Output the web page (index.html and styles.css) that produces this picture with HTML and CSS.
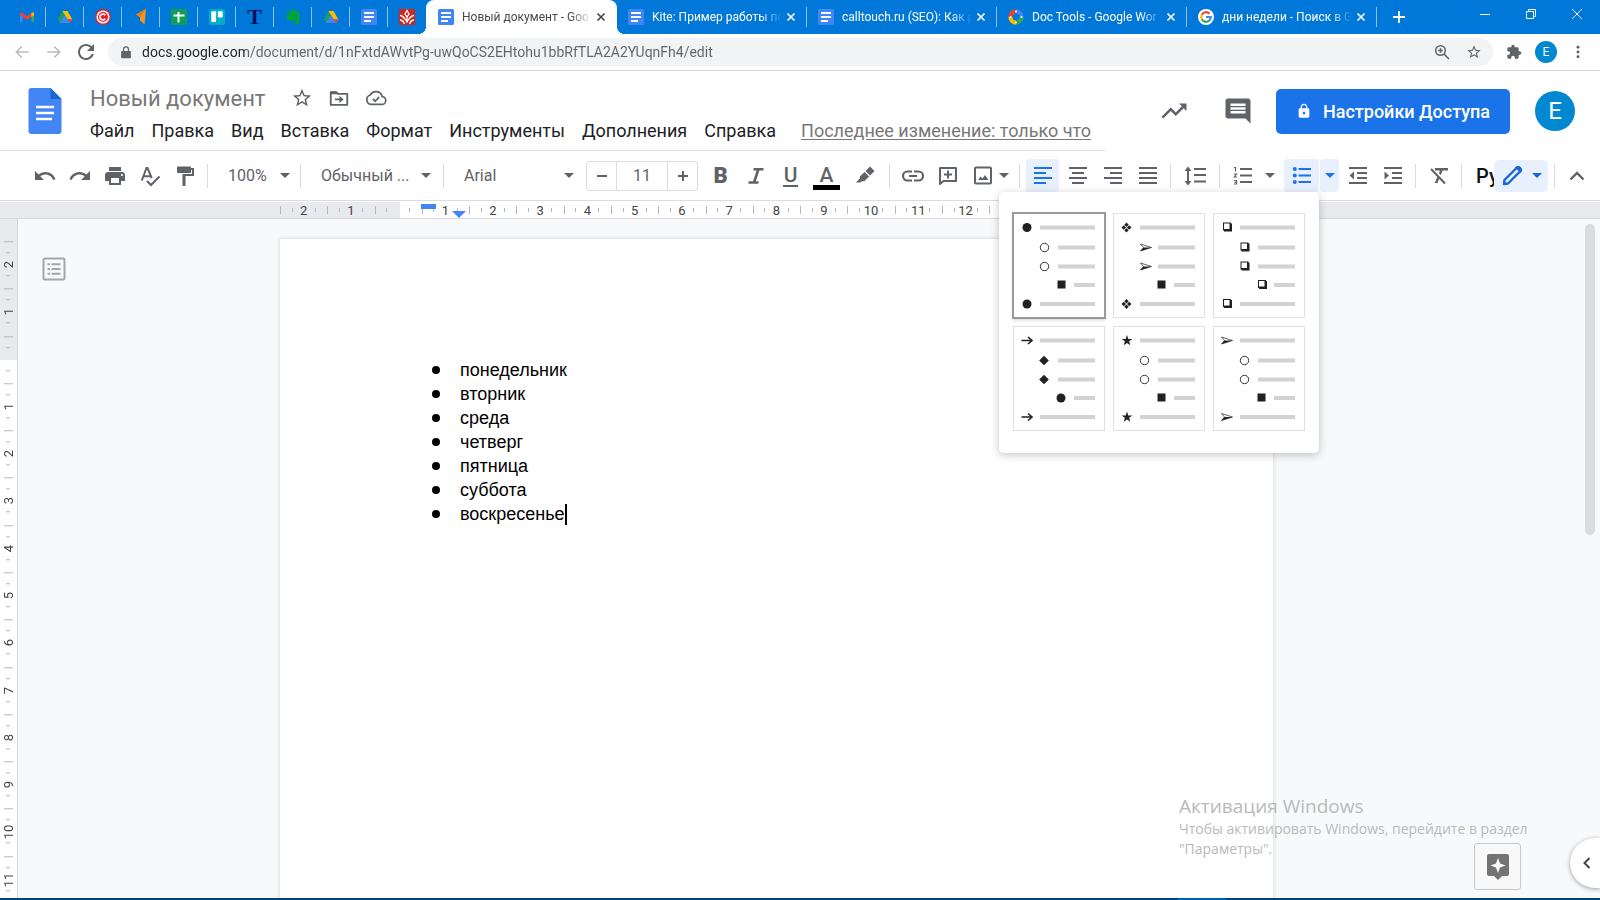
FILE: index.html
```html
<!DOCTYPE html>
<html lang="ru">
<head>
    <meta charset="UTF-8">
    <meta name="viewport" content="width=device-width, initial-scale=1.0">
    <title>Новый документ - Google Документы</title>
    <link rel="stylesheet" href="styles.css">
</head>
<body>
    <svg class="sprite" aria-hidden="true">
        <symbol id="docs" viewBox="0 0 16 16"><rect width="16" height="16" rx="1.5" fill="#4285f4"/><path d="M3 4h10M3 8h10M3 12h7" stroke="#fff" stroke-width="1.8"/></symbol>
        <symbol id="drive" viewBox="0 0 16 16"><path d="M5.5 2h5L5.2 11.2 2.700 14 .8 10.500z" fill="#1e9e58"/><path d="M5.500 2h5L15.400 10.500h-5z" fill="#fbbc04"/><path d="M5.400 10.500h5L8 14H2.700z" fill="#4285f4"/><path d="M5 10.500 8 5.800l2.700 4.700 2.500 3.500H2.700z" fill="#4285f4"/><path d="M10.400 10.500h5L13.200 14z" fill="#ea4335"/></symbol>
        <symbol id="close" viewBox="0 0 10 10"><path d="m1.500 1.500 7 7m0-7-7 7" stroke="currentColor" stroke-width="1.700"/></symbol>
        <symbol id="star" viewBox="0 0 24 24"><path d="M22 9.240l-7.190-.62L12 2 9.190 8.630 2 9.240l5.460 4.730L5.820 21 12 17.270 18.180 21l-1.630-7.030L22 9.240zM12 15.400l-3.760 2.270 1-4.280-3.320-2.880 4.380-.38L12 6.100l1.710 4.040 4.380.38-3.320 2.880 1 4.280L12 15.400z"/></symbol>
        <symbol id="lock" viewBox="0 0 24 24"><path d="M18 8h-1V6c0-2.760-2.240-5-5-5S7 3.240 7 6v2H6c-1.100 0-2 .9-2 2v10c0 1.100.9 2 2 2h12c1.100 0 2-.9 2-2V10c0-1.100-.9-2-2-2zm-6 9c-1.100 0-2-.9-2-2s.9-2 2-2 2 .9 2 2-.9 2-2 2zm3.100-9H8.900V6c0-1.710 1.390-3.100 3.100-3.100s3.100 1.390 3.100 3.100v2z"/></symbol>
        <!-- bullets of the list presets, each drawn round 0,0 -->
        <g id="b-disc"><circle r="4.500" fill="#212121"/></g>
        <g id="b-ring"><circle r="4.200" fill="none" stroke="#212121" stroke-width=".9"/></g>
        <g id="b-square"><rect x="-4" y="-4" width="8" height="8" fill="#212121"/></g>
        <g id="b-diamond"><path d="M0-4.800 4.800 0 0 4.800-4.800 0z" fill="#212121"/></g>
        <g id="b-four"><path d="M0-5 2.200-2.700 0-.5-2.200-2.700zM0 .5 2.200 2.700 0 5-2.200 2.700zM-2.700-2.200-.5 0-2.700 2.200-5 0zM2.700-2.200 5 0 2.700 2.200.5 0z" fill="#212121"/></g>
        <g id="b-shadow"><path d="M-4-4.500h8v1h1v8h-8v-1h-1z" fill="#212121"/><path d="M-3-3.500h5.500v5.500H-3z" fill="#fff"/></g>
        <g id="b-arrowhead"><path d="M-5.500-3.500 5.500 0-5.500 3.500-2.500 0z" fill="#fff" stroke="#212121" stroke-width=".7"/><path d="M-5.500 3.500-2.500 0h8z" fill="#212121"/></g>
        <g id="b-arrow"><path d="M-5.500 0H5M1-3.500 5 0 1 3.500" fill="none" stroke="#212121" stroke-width="1.600"/></g>
        <g id="b-star"><path d="M0-5.400 1.300-1.600H5.400L2.100.8 3.300 4.800 0 2.400-3.300 4.800-2.100.8-5.400-1.600H-1.300z" fill="#212121"/></g>
        <g id="bars" fill="#d2d2d2"><path d="M27 12.500h55v4H27zM45 32.500h37v4H45zM45 51.500h37v4H45zM61 70h21v4H61zM27 89h55v4H27z"/></g>
    </svg>

    <div class="tab-strip">
        <nav class="pinned-tabs" aria-label="Закреплённые вкладки">
            <a href="#" aria-label="Gmail"><svg viewBox="0 0 16 16"><path d="M1 13V4h2.600v9z" fill="#4285f4"/><path d="M12.400 4H15v9h-2.600z" fill="#34a853"/><path d="M1 3.200 3.600 4 8 7.500 12.400 4l2.600-.8v2.900L8 11 1 6.100z" fill="#ea4335"/><path d="M12.400 4 15 3.200v3l-2.600 1.800z" fill="#fbbc04"/></svg></a>
            <a href="#" aria-label="Диск"><svg><use href="#drive"/></svg></a>
            <a href="#" aria-label="Copyright"><svg viewBox="0 0 16 16"><circle cx="8" cy="8" r="8" fill="#e3202b"/><circle cx="8" cy="8" r="5.800" fill="none" stroke="#fff" stroke-width="1.500"/><path d="M10.300 6.200a3 3 0 1 0 0 3.600" fill="none" stroke="#fff" stroke-width="1.700"/></svg></a>
            <a href="#" aria-label="Аналитика"><svg viewBox="0 0 16 16"><path d="M3 5.500 13 0l-1.500 15.500L7 11.500V8z" fill="#f7941d"/><path d="M13 0 7 8 3 5.500z" fill="#e07f0f"/></svg></a>
            <a href="#" aria-label="Таблицы"><svg viewBox="0 0 16 16"><rect width="16" height="16" rx="1" fill="#0f9d58"/><path d="M2.500 6.500h11M7.500 3v10.500" stroke="#fff" stroke-width="2"/></svg></a>
            <a href="#" aria-label="Trello"><svg viewBox="0 0 16 16"><rect width="16" height="16" rx="2.500" fill="#00aecc"/><rect x="2.300" y="2.300" width="4.800" height="10.700" rx="1" fill="#fff"/><rect x="8.900" y="2.300" width="4.800" height="6.200" rx="1" fill="#fff"/></svg></a>
            <a href="#" class="t-tab">T</a>
            <a href="#" aria-label="Evernote"><svg viewBox="0 0 16 16"><path d="M5 1v3.500H1.500zM6 .8C8 0 9.500 1 10 2c2 0 4 .5 4.300 2 .6 3 .5 6-.3 9-.4 1.800-1.500 2.500-3 2.500-2.500 0-3-3.500-.5-4v1.500c-.8.300-.5 1 .3 1 1 0 .7-2.500-.8-3-.8 1-4 .8-5.500.3C2 10.800 1.500 7 1.500 5.500h4.500z" fill="#00a82d"/><path d="M7 15c-.8-1.500-.3-3.300 1.500-4l2 .3v1.500z" fill="#0078d9"/><circle cx="11.300" cy="7" r=".9" fill="#0078d9"/></svg></a>
            <a href="#" aria-label="Диск"><svg><use href="#drive"/></svg></a>
            <a href="#" aria-label="Документы"><svg><use href="#docs"/></svg></a>
            <a href="#" aria-label="Портал"><svg viewBox="0 0 16 16"><path d="M0 0h16v16H0z" fill="#d0261c"/><path d="M8 1.500 10 5 8 8 6 5zM1 6.500c3 0 4.500 2.500 7 6.500 2.500-4 4-6.500 7-6.500M1 11c2.500 0 3.500 1.500 4.500 4M15 11c-2.500 0-3.500 1.500-4.500 4M8 8v5" fill="none" stroke="#fff" stroke-width="1.300"/></svg></a>
        </nav>
        <div class="tab active">
            <svg class="favicon"><use href="#docs"/></svg>
            <a href="#">Новый документ - Goo</a>
            <button aria-label="Закрыть"><svg><use href="#close"/></svg></button>
        </div>
        <div class="tab">
            <svg class="favicon"><use href="#docs"/></svg>
            <a href="#">Kite: Пример работы по</a>
            <button aria-label="Закрыть"><svg><use href="#close"/></svg></button>
        </div>
        <div class="tab">
            <svg class="favicon"><use href="#docs"/></svg>
            <a href="#">calltouch.ru (SEO): Как р</a>
            <button aria-label="Закрыть"><svg><use href="#close"/></svg></button>
        </div>
        <div class="tab">
            <svg class="favicon" viewBox="0 0 16 16"><g fill="none" stroke-width="4.200"><path d="M8 2.400A5.600 5.600 0 0 1 13.600 8" stroke="#4285f4"/><path d="M13.600 8A5.600 5.600 0 0 1 8 13.600" stroke="#34a853"/><path d="M8 13.600A5.600 5.600 0 0 1 2.400 8" stroke="#fbbc04"/><path d="M2.400 8A5.600 5.600 0 0 1 8 2.400" stroke="#ea4335"/></g><g fill="#fff"><circle cx="8" cy="2.500" r="1"/><circle cx="13.500" cy="8" r="1"/><circle cx="8" cy="13.500" r="1"/><circle cx="2.500" cy="8" r="1"/></g></svg>
            <a href="#">Doc Tools - Google Wor</a>
            <button aria-label="Закрыть"><svg><use href="#close"/></svg></button>
        </div>
        <div class="tab">
            <svg class="favicon" viewBox="0 0 16 16"><circle cx="8" cy="8" r="8" fill="#fff"/><g fill="none" stroke-width="2.200"><path d="M11.500 4.700A4.800 4.800 0 0 0 3.800 5.800" stroke="#ea4335"/><path d="M3.800 5.800a4.800 4.800 0 0 0 0 4.400" stroke="#fbbc04"/><path d="M3.800 10.200a4.800 4.800 0 0 0 7.400 1.400" stroke="#34a853"/><path d="M11.200 11.600A4.800 4.800 0 0 0 12.800 8H8" stroke="#4285f4"/></g></svg>
            <a href="#">дни недели - Поиск в G</a>
            <button aria-label="Закрыть"><svg><use href="#close"/></svg></button>
        </div>
        <button class="new-tab" aria-label="Новая вкладка"><svg viewBox="0 0 12 12"><path d="M6 0v12M0 6h12" stroke="#fff" stroke-width="1.800"/></svg></button>
        <div class="window-controls">
            <button aria-label="Свернуть"><svg viewBox="0 0 12 12"><path d="M1 6.500h10"/></svg></button>
            <button aria-label="Восстановить"><svg viewBox="0 0 12 12"><path d="M1.500 3.500h7v7h-7zM3.500 3.500v-2h7v7h-2"/></svg></button>
            <button aria-label="Закрыть окно"><svg viewBox="0 0 12 12"><path d="m1 1 10 10m0-10L1 11"/></svg></button>
        </div>
    </div>

    <div class="address-bar">
        <div class="nav-buttons">
            <button class="off" aria-label="Назад"><svg viewBox="0 0 24 24"><path d="M21 11H6.800l5.600-5.600L11 4l-8 8 8 8 1.400-1.400L6.800 13H21z"/></svg></button>
            <button class="off" aria-label="Вперёд"><svg viewBox="0 0 24 24"><path d="M3 11h14.200l-5.600-5.600L13 4l8 8-8 8-1.400-1.400 5.600-5.600H3z"/></svg></button>
            <button aria-label="Обновить"><svg viewBox="3 3 18 18"><path d="M17.650 6.350C16.200 4.900 14.210 4 12 4c-4.420 0-7.990 3.580-7.990 8s3.570 8 7.990 8c3.730 0 6.840-2.550 7.730-6h-2.080c-.82 2.330-3.040 4-5.650 4-3.310 0-6-2.690-6-6s2.690-6 6-6c1.660 0 3.140.69 4.220 1.780L13 11h7V4l-2.350 2.350z"/></svg></button>
        </div>
        <form class="omnibox">
            <svg class="url-lock" viewBox="0 0 12 16"><path d="M1 6h10a1 1 0 0 1 1 1v7a1 1 0 0 1-1 1H1a1 1 0 0 1-1-1V7a1 1 0 0 1 1-1z"/><path d="M3 6.500V4a3 3 0 0 1 6 0v2.500" fill="none" stroke="#5f6368" stroke-width="1.500"/></svg>
            <input type="text" aria-label="Адрес" value="docs.google.com/document/d/1nFxtdAWvtPg-uwQoCS2EHtohu1bbRfTLA2A2YUqnFh4/edit">
            <button type="button" aria-label="Масштаб"><svg viewBox="0 0 16 16"><g fill="none" stroke="#5f6368" stroke-width="1.500"><circle cx="6.500" cy="6.500" r="4.800"/><path d="m10 10 5 5M4.200 6.500h4.600M6.500 4.200v4.600"/></g></svg></button>
            <button type="button" aria-label="В закладки"><svg><use href="#star"/></svg></button>
        </form>
        <button class="extensions" aria-label="Расширения"><svg viewBox="0 0 24 24"><path d="M20.500 11H19V7c0-1.100-.9-2-2-2h-4V3.500C13 2.120 11.880 1 10.500 1S8 2.120 8 3.500V5H4c-1.100 0-1.990.9-1.990 2v3.800H3.500c1.490 0 2.700 1.210 2.700 2.700s-1.210 2.700-2.700 2.700H2V20c0 1.100.9 2 2 2h3.800v-1.500c0-1.490 1.210-2.700 2.700-2.700 1.490 0 2.700 1.210 2.700 2.700V22H17c1.100 0 2-.9 2-2v-4h1.500c1.380 0 2.500-1.120 2.500-2.500S21.880 11 20.500 11z"/></svg></button>
        <button class="avatar small">E</button>
        <button class="more" aria-label="Меню"><svg viewBox="0 0 16 16"><circle cx="8" cy="2.500" r="1.700"/><circle cx="8" cy="8" r="1.700"/><circle cx="8" cy="13.500" r="1.700"/></svg></button>
    </div>

    <header class="header">
        <div class="doc-info">
            <a href="#" class="logo" aria-label="Документы"><svg viewBox="0 0 33 46"><path d="M3 0h19l11 11v32a3 3 0 0 1-3 3H3a3 3 0 0 1-3-3V3a3 3 0 0 1 3-3z" fill="#4285f4"/><path d="M22 0l11 11H22z" fill="#1967d2"/><path d="M7.500 19h18M7.500 25h18M7.500 31h16" stroke="#fff" stroke-width="2.400"/></svg></a>
            <div>
                <div class="title-row">
                    <input class="doc-title" type="text" aria-label="Название документа" value="Новый документ">
                    <button aria-label="Пометить"><svg><use href="#star"/></svg></button>
                    <button aria-label="Переместить"><svg viewBox="0 0 24 24"><path d="M3 5.500h6l2 2h10v12H3z" fill="none" stroke="#5f6368" stroke-width="2" stroke-linejoin="round"/><path d="M3 5h6l2 3H3zM7.500 12.500h5V9.500l4.500 4-4.500 4v-3h-5z"/></svg></button>
                    <button aria-label="Сохранено на Диске"><svg viewBox="0 0 24 24"><path d="M18.700 10.400A7 7 0 0 0 5.700 8.700 5.300 5.300 0 0 0 6.500 19H18a4.300 4.300 0 0 0 .7-8.600z" fill="none" stroke="#5f6368" stroke-width="1.900"/><path d="m8.500 13 2.500 2.500 4.500-4.500" fill="none" stroke="#5f6368" stroke-width="1.800"/></svg></button>
                </div>
                <nav class="menu-bar">
                    <button>Файл</button>
                    <button>Правка</button>
                    <button>Вид</button>
                    <button>Вставка</button>
                    <button>Формат</button>
                    <button>Инструменты</button>
                    <button>Дополнения</button>
                    <button>Справка</button>
                    <a href="#">Последнее изменение: только что</a>
                </nav>
            </div>
        </div>
        <div class="header-actions">
            <button class="header-icon" aria-label="Статистика"><svg viewBox="0 0 24 24"><path d="M16 6l2.290 2.290-4.880 4.880-4-4L2 16.590 3.410 18l6-6 4 4 6.300-6.290L22 12V6z"/></svg></button>
            <button class="header-icon" aria-label="Комментарии"><svg viewBox="0 0 24 24"><path d="M22 4c0-1.100-.9-2-2-2H4c-1.100 0-2 .9-2 2v12c0 1.100.9 2 2 2h14l4 4zM18 14H6v-2h12v2zm0-3H6V9h12v2zm0-3H6V6h12v2z"/></svg></button>
            <button class="share"><svg><use href="#lock"/></svg>Настройки Доступа</button>
            <button class="avatar">E</button>
        </div>
    </header>

    <div class="toolbar">
        <div class="group">
            <button aria-label="Отменить"><svg viewBox="0 0 24 24"><path d="M12.500 8c-2.650 0-5.050.99-6.900 2.600L2 7v9h9l-3.620-3.620c1.390-1.160 3.160-1.880 5.120-1.880 3.540 0 6.550 2.310 7.600 5.500l2.370-.78C21.080 11.030 17.150 8 12.500 8z"/></svg></button>
            <button aria-label="Повторить"><svg viewBox="0 0 24 24"><path d="M18.400 10.600C16.550 8.990 14.150 8 11.500 8c-4.650 0-8.580 3.030-9.960 7.220L3.900 16c1.050-3.190 4.050-5.500 7.600-5.500 1.950 0 3.730.72 5.120 1.880L13 16h9V7l-3.600 3.600z"/></svg></button>
            <button aria-label="Печать"><svg viewBox="0 0 24 24"><path d="M19 8H5c-1.660 0-3 1.340-3 3v6h4v4h12v-4h4v-6c0-1.660-1.340-3-3-3zm-3 11H8v-5h8v5zm3-7c-.55 0-1-.45-1-1s.45-1 1-1 1 .45 1 1-.45 1-1 1zm-1-9H6v4h12V3z"/></svg></button>
            <button aria-label="Правописание"><svg viewBox="0 0 24 24"><g fill="none" stroke="#5f6368" stroke-width="2"><path d="M3.800 16.500 8.500 4h1l4.200 10M5.500 12.200h7"/><path d="m9 17 4 4 8.500-8.500"/></g></svg></button>
            <button aria-label="Копировать форматирование"><svg viewBox="0 0 24 24"><path d="M18 4V3.500c0-.55-.45-1-1-1H5c-.55 0-1 .45-1 1V8c0 .55.450 1 1 1h12c.55 0 1-.45 1-1V6h1v4H9.500v11c0 .55.450 1 1 1h1c.55 0 1-.45 1-1v-9H21V4z"/></svg></button>
        </div>
        <span class="sep"></span>
        <label class="drop zoom"><select aria-label="Масштаб"><option>100%</option></select></label>
        <span class="sep"></span>
        <label class="drop style"><select aria-label="Стили"><option>Обычный ...</option></select></label>
        <span class="sep"></span>
        <label class="drop font"><select aria-label="Шрифт"><option>Arial</option></select></label>
        <div class="font-size">
            <button aria-label="Уменьшить"><svg viewBox="0 0 12 12"><path d="M1 5h10v2H1z"/></svg></button>
            <input type="text" aria-label="Размер шрифта" value="11">
            <button aria-label="Увеличить"><svg viewBox="0 0 12 12"><path d="M5 1h2v4h4v2H7v4H5V7H1V5h4z"/></svg></button>
        </div>
        <div class="group">
            <button class="bold">B</button>
            <button aria-label="Курсив"><svg viewBox="0 0 24 24"><path d="M9.500 5.200h10M4.500 18.500h10M14.500 5l-4.500 13.500" fill="none" stroke="#5f6368" stroke-width="2.600"/></svg></button>
            <button class="underline">U</button>
            <button class="text-color">A</button>
            <button class="marker" aria-label="Цвет выделения"><svg viewBox="0 0 24 24"><path d="m17 2.500 4.500 4.500-4.500 4.500-4.500-4.500zM11.600 8l4.500 4.500-4 4c-1 1-2 1-3 .5L7.500 18.500H3l4-4.200c-.5-.8-.4-1.600.4-2.300z"/></svg></button>
        </div>
        <span class="sep"></span>
        <div class="group">
            <button aria-label="Ссылка"><svg viewBox="0 0 24 24"><path d="M11 7.500H6.500a4.500 4.500 0 0 0 0 9H11M13 7.500h4.500a4.500 4.500 0 0 1 0 9H13M8 12h8" fill="none" stroke="#5f6368" stroke-width="2.200"/></svg></button>
            <button aria-label="Добавить комментарий"><svg viewBox="0 0 24 24"><path d="M4 4h16v13H7.500L4 20z" fill="none" stroke="#5f6368" stroke-width="2" stroke-linejoin="round"/><path d="M11 6.500h2v3h3v2h-3v3h-2v-3H8v-2h3z"/></svg></button>
            <button aria-label="Изображение"><svg viewBox="0 0 24 24"><rect x="4" y="3.500" width="16" height="16" rx="1" fill="none" stroke="#5f6368" stroke-width="2"/><path d="m7 16 2.500-3.500 2 2 2.500-3.500 3.500 5z"/></svg></button>
            <button class="arrow image-arrow" aria-label="Вставить изображение"></button>
        </div>
        <span class="sep"></span>
        <div class="group">
            <button class="on" aria-label="По левому краю"><svg viewBox="0 0 24 24"><path d="M3 3h18v2H3zM3 8h12v2H3zM3 13h18v2H3zM3 18h12v2H3z"/></svg></button>
            <button aria-label="По центру"><svg viewBox="0 0 24 24"><path d="M3 3h18v2H3zM6 8h12v2H6zM3 13h18v2H3zM6 18h12v2H6z"/></svg></button>
            <button aria-label="По правому краю"><svg viewBox="0 0 24 24"><path d="M3 3h18v2H3zM9 8h12v2H9zM3 13h18v2H3zM9 18h12v2H9z"/></svg></button>
            <button aria-label="По ширине"><svg viewBox="0 0 24 24"><path d="M3 3h18v2H3zM3 8h18v2H3zM3 13h18v2H3zM3 18h18v2H3z"/></svg></button>
        </div>
        <span class="sep"></span>
        <div class="group">
            <button class="spacing" aria-label="Интервал"><svg viewBox="0 0 24 24"><path d="M6 7h2.500L5 2.500 1.500 7H4v10H1.500L5 21.500 8.500 17H6V7zm5-3v2h12V4H11zm0 14.500h12v-2H11v2zm0-6.500h12v-2H11v2z"/></svg></button>
        </div>
        <span class="sep"></span>
        <div class="group">
            <button aria-label="Нумерованный список"><svg viewBox="0 0 24 24"><path d="M9 4h12v2H9zM9 10.500h12v2H9zM9 17h12v2H9z"/><path d="M3 3.500h1.500V7.500M3 10h2.500L3.300 13h2.700M3 16.500h2.600v3.500H3M3.500 18.300h2" fill="none" stroke="#5f6368" stroke-width="1.200"/></svg></button>
            <button class="arrow" aria-label="Виды нумерации"></button>
        </div>
        <div class="bullets">
            <button class="on" aria-label="Маркированный список"><svg viewBox="0 0 24 24"><path d="M8.500 4H21v2H8.500zM8.500 10.500H21v2H8.500zM8.500 17H21v2H8.500z"/><circle cx="4.800" cy="5" r="2"/><circle cx="4.800" cy="11.500" r="2"/><circle cx="4.800" cy="18" r="2"/></svg></button>
            <button class="on arrow" aria-label="Виды маркеров"></button>
            <div class="bullet-menu">
                <button class="selected" aria-label="Круг, кольцо, квадрат"><svg viewBox="0 0 92 105"><use href="#bars"/><use href="#b-disc" x="14" y="14.500"/><use href="#b-ring" x="31.500" y="34.500"/><use href="#b-ring" x="31.500" y="53.500"/><use href="#b-square" x="48.500" y="71.500"/><use href="#b-disc" x="14" y="91"/></svg></button>
                <button aria-label="Ромбы, стрелка, квадрат"><svg viewBox="0 0 92 105"><use href="#bars"/><use href="#b-four" x="13.500" y="14.500"/><use href="#b-arrowhead" x="33" y="34.500"/><use href="#b-arrowhead" x="33" y="53.500"/><use href="#b-square" x="48.500" y="71.500"/><use href="#b-four" x="13.500" y="91"/></svg></button>
                <button aria-label="Квадрат с тенью"><svg viewBox="0 0 92 105"><use href="#bars"/><use href="#b-shadow" x="14" y="14"/><use href="#b-shadow" x="31.500" y="34"/><use href="#b-shadow" x="31.500" y="53"/><use href="#b-shadow" x="49" y="71.500"/><use href="#b-shadow" x="14" y="90.500"/></svg></button>
                <button aria-label="Стрелка, ромб, круг"><svg viewBox="0 0 92 105"><use href="#bars"/><use href="#b-arrow" x="14" y="14.500"/><use href="#b-diamond" x="31" y="34.500"/><use href="#b-diamond" x="31" y="53.500"/><use href="#b-disc" x="48" y="72"/><use href="#b-arrow" x="14" y="91"/></svg></button>
                <button aria-label="Звезда, кольцо, квадрат"><svg viewBox="0 0 92 105"><use href="#bars"/><use href="#b-star" x="14" y="14.500"/><use href="#b-ring" x="31.500" y="34.500"/><use href="#b-ring" x="31.500" y="53.500"/><use href="#b-square" x="48.500" y="71.500"/><use href="#b-star" x="14" y="91"/></svg></button>
                <button aria-label="Стрелка, кольцо, квадрат"><svg viewBox="0 0 92 105"><use href="#bars"/><use href="#b-arrowhead" x="14" y="14.500"/><use href="#b-ring" x="31.500" y="34.500"/><use href="#b-ring" x="31.500" y="53.500"/><use href="#b-square" x="48.500" y="71.500"/><use href="#b-arrowhead" x="14" y="91"/></svg></button>
            </div>
        </div>
        <div class="group">
            <button aria-label="Уменьшить отступ"><svg viewBox="0 0 24 24"><path d="M3 3h18v2H3zM11 8h10v2H11zM11 13h10v2H11zM3 18h18v2H3zM8 7.500v8L3.500 11.500z"/></svg></button>
            <button aria-label="Увеличить отступ"><svg viewBox="0 0 24 24"><path d="M3 3h18v2H3zM11 8h10v2H11zM11 13h10v2H11zM3 18h18v2H3zM3.500 7.500v8L8 11.500z"/></svg></button>
        </div>
        <span class="sep"></span>
        <div class="group">
            <button aria-label="Очистить форматирование"><svg viewBox="0 0 24 24"><path d="M8 4h13v2.500H8zM13 6h2.800l-2 5-1.800-1.500zM10.500 12.500l1.800 1.800L10.500 19H7.700z"/><path d="M4 5l14 14.500" stroke="#5f6368" stroke-width="2"/></svg></button>
        </div>
        <span class="sep"></span>
        <button class="input-tools">Ру</button>
        <button class="mode" aria-label="Режим редактирования"><svg viewBox="0 0 24 24"><path d="m4 20 .5-4L16 4.500a2.200 2.200 0 0 1 3.500 3.500L8 19.500z" fill="none" stroke="#1967d2" stroke-width="2.400" stroke-linejoin="round"/><path d="m15 3.500 2-1.500h2.500L22 4.500V7l-1.500 2zM3 21v-4l4 4z" fill="#1967d2"/></svg><span class="caret-down"></span></button>
        <span class="sep"></span>
        <button class="collapse" aria-label="Скрыть меню"><svg viewBox="0 0 16 16"><path d="m1.500 11.500 6.500-6.500 6.500 6.500" fill="none" stroke="#5f6368" stroke-width="2.400"/></svg></button>
    </div>

    <div class="ruler">
        <div class="ruler-scale">
            <span>2</span><span>1</span><span></span><span>1</span><span>2</span><span>3</span><span>4</span><span>5</span><span>6</span><span>7</span><span>8</span><span>9</span><span>10</span><span>11</span><span>12</span><span></span><span></span><span></span><span></span><span></span><span></span>
            <i class="first-line"></i>
            <i class="left-indent"></i>
        </div>
    </div>

    <main class="workspace">
        <div class="side-ruler">
            <div class="side-scale">
                <span>2</span><span>1</span><span></span><span>1</span><span>2</span><span>3</span><span>4</span><span>5</span><span>6</span><span>7</span><span>8</span><span>9</span><span>10</span><span>11</span>
            </div>
        </div>
        <button class="outline" aria-label="Структура документа"><svg viewBox="0 0 24 24"><rect x="1.500" y="1.500" width="21" height="21" rx="1.500" fill="none" stroke="#a3a6a9" stroke-width="2"/><path d="M5.500 7.200h2.500m1.500 0h9M5.500 12h2.500m1.500 0h9M5.500 16.800h2.500m1.500 0h9" stroke="#a3a6a9" stroke-width="2"/></svg></button>
        <article class="page">
            <ul>
                <li>понедельник</li>
                <li>вторник</li>
                <li>среда</li>
                <li>четверг</li>
                <li>пятница</li>
                <li>суббота</li>
                <li>воскресенье<span class="cursor"></span></li>
            </ul>
        </article>
        <div class="scroll-thumb"></div>
        <div class="activation">
            <h2>Активация Windows</h2>
            <p>Чтобы активировать Windows, перейдите в раздел<br>"Параметры".</p>
        </div>
        <button class="explore" aria-label="Анализ данных"><svg viewBox="0 0 24 28"><path d="M3 1h18a2 2 0 0 1 2 2v18a2 2 0 0 1-2 2h-5l-4 4-4-4H3a2 2 0 0 1-2-2V3a2 2 0 0 1 2-2z" fill="#737373"/><path d="m12 5 2 5.500 5.500 2-5.500 2-2 5.500-2-5.500-5.500-2 5.500-2z" fill="#fff"/></svg></button>
        <button class="side-toggle" aria-label="Показать боковую панель"><svg viewBox="0 0 12 12"><path d="M8.500 1 3.500 6l5 5" fill="none" stroke="#444" stroke-width="2"/></svg></button>
    </main>
    <footer class="taskbar"></footer>
</body>
</html>
```
FILE: styles.css
```css
* {
    box-sizing: border-box;
}

body {
    display: flex;
    flex-direction: column;
    height: 100vh;
    margin: 0;
    overflow: hidden;
    font-family: Roboto, "Liberation Sans", sans-serif;
    color: #202124;
    background-color: #fff;
}

button,
input,
select {
    flex: none;
    margin: 0;
    padding: 0;
    border: 0;
    outline: 0;
    background: none;
    color: inherit;
    font-family: inherit;
}

button {
    display: flex;
    align-items: center;
    justify-content: center;
}

svg {
    display: block;
    flex: none;
    fill: #5f6368;
}

.sprite {
    position: absolute;
    width: 0;
    height: 0;
}

/* browser tabs */
.tab-strip {
    display: flex;
    flex: none;
    height: 34px;
    padding-left: 8px;
    background-color: #0078d9;
    font-size: 12px;
}

.pinned-tabs {
    display: flex;
    flex: none;
    align-items: center;
}

.pinned-tabs a {
    display: flex;
    justify-content: center;
    width: 38px;
    height: 20px;
    padding: 2px 0;
    border-right: 1px solid #8cc1ee;
    text-decoration: none;
}

.pinned-tabs a:last-child {
    border-color: transparent;
}

.pinned-tabs svg,
.favicon {
    width: 16px;
    height: 16px;
}

.pinned-tabs .t-tab {
    color: #0a0f5c;
    font: bold 22px/16px "Liberation Serif", serif;
}

.tab {
    display: flex;
    align-items: center;
    width: 190px;
    min-width: 0;
    padding: 0 8px 0 11px;
    color: #fff;
    background: linear-gradient(#8cc1ee, #8cc1ee) right 0 top 7px / 1px 20px no-repeat;
}

.tab .favicon {
    margin-right: 8px;
}

.tab a {
    flex: 1;
    overflow: hidden;
    color: inherit;
    text-decoration: none;
    white-space: nowrap;
    -webkit-mask-image: linear-gradient(to right, #000 108px, transparent 130px);
    mask-image: linear-gradient(to right, #000 108px, transparent 130px);
}

.tab button {
    width: 16px;
    height: 16px;
    margin-left: 2px;
}

.tab button svg {
    width: 10px;
    height: 10px;
}

.tab.active {
    position: relative;
    width: 191px;
    padding-left: 12px;
    color: #45494d;
    background: #fff;
    border-radius: 8px 8px 0 0;
}

.tab.active::before,
.tab.active::after {
    content: "";
    position: absolute;
    bottom: 0;
    width: 8px;
    height: 8px;
}

.tab.active::before {
    right: 100%;
    background: radial-gradient(circle at 0 0, transparent 8px, #fff 8px);
}

.tab.active::after {
    left: 100%;
    background: radial-gradient(circle at 100% 0, transparent 8px, #fff 8px);
}

.new-tab {
    width: 44px;
}

.new-tab svg,
.window-controls svg {
    width: 12px;
    height: 12px;
}

.window-controls {
    display: flex;
    height: 28px;
    margin-left: auto;
}

.window-controls button {
    width: 46px;
}

.window-controls svg {
    fill: none;
    stroke: #fff;
    stroke-width: 1;
}

/* address row */
.address-bar {
    display: flex;
    flex: none;
    align-items: center;
    height: 37px;
    padding: 0 6px;
    border-bottom: 1px solid #d5d7da;
}

.nav-buttons {
    display: flex;
    margin-right: 6px;
}

.nav-buttons button {
    width: 32px;
}

.nav-buttons svg {
    width: 18px;
    height: 18px;
}

.nav-buttons .off svg {
    fill: #b8babd;
}

.omnibox {
    display: flex;
    flex: 1;
    align-items: center;
    height: 28px;
    padding: 0 3px 0 12px;
    border-radius: 14px;
    background-color: #f1f3f4;
}

.url-lock {
    width: 12px;
    height: 13px;
    margin-right: 10px;
}

.omnibox input {
    flex: 1;
    height: 28px;
    font-size: 14px;
    color: transparent;
    background: linear-gradient(to right, #202124 104px, #5f6368 104px);
    -webkit-background-clip: text;
    background-clip: text;
}

.omnibox button {
    width: 32px;
}

.omnibox button svg {
    width: 16px;
    height: 16px;
}

.extensions {
    width: 42px;
}

.extensions svg {
    width: 16px;
    height: 16px;
}

.avatar {
    width: 40px;
    height: 40px;
    border-radius: 50%;
    background-color: #0288d1;
    color: #fff;
    font-size: 24px;
}

.avatar.small {
    width: 22px;
    height: 22px;
    font-size: 12px;
}

.more {
    width: 32px;
    margin-left: 5px;
}

.more svg {
    width: 14px;
    height: 14px;
}

/* document header */
.header {
    display: flex;
    flex: none;
    justify-content: space-between;
    height: 80px;
}

.doc-info {
    display: flex;
    flex: none;
    padding: 12px 14px 0 28px;
    border-bottom: 1px solid #dadce0;
}

.logo {
    width: 62px;
    padding-top: 5px;
}

.logo svg {
    width: 34px;
    height: 46px;
}

.title-row {
    display: flex;
    align-items: center;
    height: 30px;
}

.doc-title {
    width: 193px;
    height: 30px;
    color: #777;
    font-size: 22px;
}

.title-row button {
    width: 37px;
}

.title-row button svg {
    width: 22px;
    height: 22px;
}

.menu-bar {
    display: flex;
    align-items: center;
    gap: 17px;
    height: 34px;
    font-size: 18px;
    white-space: nowrap;
}

.menu-bar button {
    font-size: 18px;
}

.menu-bar a {
    margin-left: 8px;
    color: #777;
    text-underline-offset: 2px;
}

.header-actions {
    display: flex;
    align-items: center;
    padding-right: 25px;
}

.header-icon {
    width: 64px;
}

.header-icon svg {
    width: 30px;
    height: 30px;
}

.share {
    gap: 11px;
    width: 234px;
    height: 45px;
    margin: 0 25px 0 6px;
    border-radius: 5px;
    background-color: #1a73e8;
    color: #fff;
    font-size: 18px;
    font-weight: 500;
}

.share svg {
    width: 16px;
    height: 16px;
    fill: #fff;
}

/* toolbar */
.toolbar {
    position: relative;
    z-index: 2;
    display: flex;
    flex: none;
    align-items: center;
    height: 50px;
    padding-left: 28px;
    border-bottom: 1px solid #dadce0;
    color: #5f6368;
}

.group {
    display: flex;
    flex: none;
    gap: 2px;
}

.group button,
.bullets > button {
    width: 33px;
    height: 33px;
    border-radius: 3px;
}

.toolbar svg {
    width: 24px;
    height: 24px;
}

.toolbar .on {
    background-color: #e8f0fe;
    color: #1a73e8;
}

.toolbar .on svg {
    fill: #1a73e8;
}

.sep {
    flex: none;
    width: 1px;
    height: 24px;
    margin: 0 6px;
    background-color: #dadce0;
}

.drop {
    display: grid;
    flex: none;
    align-items: center;
}

.drop select {
    grid-area: 1 / 1;
    width: 100%;
    height: 30px;
    padding-left: 14px;
    appearance: none;
    font-size: 16px;
}

.drop::after,
.arrow::after,
.caret-down {
    content: "";
    border: 5px solid transparent;
    border-top-color: currentColor;
    border-bottom: 0;
}

.drop::after {
    grid-area: 1 / 1;
    justify-self: end;
    margin-right: 4px;
    pointer-events: none;
}

.zoom {
    width: 80px;
}

.style {
    width: 130px;
}

.font {
    width: 130px;
    margin-right: 6px;
}

.style::after,
.font::after {
    margin-right: 6px;
}

.font-size {
    display: flex;
    flex: none;
    height: 30px;
    margin-right: 6px;
    border: 1px solid #dadce0;
    border-radius: 3px;
}

.font-size button {
    width: 29px;
}

.font-size svg {
    width: 12px;
    height: 12px;
}

.font-size input {
    width: 52px;
    border: solid #dadce0;
    border-width: 0 1px;
    font-size: 16px;
    text-align: center;
}

.group .bold {
    font-size: 22px;
    font-weight: 900;
}

.group .underline,
.group .text-color {
    flex-direction: column;
    font-size: 21px;
    font-weight: 500;
    line-height: 20px;
}

.underline::after {
    content: "";
    width: 15px;
    height: 2px;
    background-color: #5f6368;
}

.group .text-color {
    width: 35px;
    padding-top: 4px;
}

.text-color::after {
    content: "";
    width: 27px;
    height: 5px;
    background-color: #000;
}

.group .marker {
    width: 37px;
}

.group .arrow {
    width: 18px;
}

.group .image-arrow {
    margin-left: -6px;
}

.group .spacing {
    width: 36px;
}

.bullets {
    position: relative;
    display: flex;
    flex: none;
    gap: 1px;
    margin: 0 2px 0 5px;
}

.bullets > button {
    width: 35px;
}

.bullets > .arrow {
    width: 19px;
}

.bullet-menu {
    position: absolute;
    top: 100%;
    left: -285px;
    display: grid;
    grid-template-columns: repeat(3, 92px);
    gap: 8px;
    padding: 21px 14px 22px;
    border-radius: 5px;
    background-color: #fff;
    box-shadow: 0 2px 8px rgba(60, 64, 67, 0.3);
}

.bullet-menu button {
    height: 105px;
    box-shadow: inset 0 0 0 1px #e0e0e0;
}

.bullet-menu .selected {
    box-shadow: 0 0 0 1px #999, inset 0 0 0 1px #999, 0 2px 3px rgba(0, 0, 0, 0.2);
}

.bullet-menu svg {
    width: 92px;
    height: 105px;
}

.input-tools {
    width: 26px;
    padding-left: 8px;
    overflow: hidden;
    justify-content: flex-start;
    color: #111;
    font-size: 20px;
    font-weight: 500;
}

.mode {
    gap: 8px;
    width: 54px;
    height: 32px;
    border-radius: 5px;
    background-color: #e8f0fe;
    color: #1967d2;
}

.collapse {
    width: 32px;
}

.toolbar .collapse svg {
    width: 16px;
    height: 16px;
}

/* rulers */
.ruler {
    flex: none;
    height: 18px;
    padding: 0 327px 0 280px;
    border-top: 1px solid #fff;
    border-bottom: 1px solid #d5d7da;
    background-color: #e8eaed;
}

.ruler-scale {
    position: relative;
    display: grid;
    grid-template-columns: repeat(21, 1fr);
    height: 16px;
    background: linear-gradient(#fff, #fff) 120px 0 / 800px 16px no-repeat;
    color: #444;
    font-size: 13px;
    line-height: 17px;
    text-align: center;
}

.ruler-scale span {
    background:
        linear-gradient(#b4b7ba, #b4b7ba) 0 4px / 1px 8px no-repeat,
        linear-gradient(#b4b7ba, #b4b7ba) 25% 6px / 1px 4px no-repeat,
        linear-gradient(#b4b7ba, #b4b7ba) 75% 6px / 1px 4px no-repeat;
}

.first-line {
    position: absolute;
    top: 2px;
    left: 141px;
    width: 15px;
    height: 5px;
    background-color: #4285f4;
}

.left-indent {
    position: absolute;
    top: 9px;
    left: 172px;
    border: 7px solid transparent;
    border-top-color: #4285f4;
    border-bottom: 0;
}

.workspace {
    position: relative;
    display: flex;
    flex: 1;
    min-height: 0;
    overflow: hidden;
    background-color: #f8f9fa;
}

.side-ruler {
    flex: none;
    width: 18px;
    padding-top: 22px;
    border-right: 1px solid #d5d7da;
    background: linear-gradient(#e8eaed 141px, #fff 141px);
}

.side-scale {
    display: grid;
    grid-template-rows: repeat(14, 1fr);
    height: 662px;
    color: #444;
    font-size: 13px;
}

.side-scale span {
    width: 18px;
    line-height: 18px;
    text-align: center;
    writing-mode: vertical-rl;
    transform: rotate(180deg);
    background:
        linear-gradient(#b4b7ba, #b4b7ba) 5px 100% / 9px 1px no-repeat,
        linear-gradient(#b4b7ba, #b4b7ba) 8px 25% / 4px 1px no-repeat,
        linear-gradient(#b4b7ba, #b4b7ba) 8px 75% / 4px 1px no-repeat;
}

.outline {
    align-self: flex-start;
    width: 24px;
    margin: 38px 0 0 24px;
}

.outline svg {
    width: 24px;
    height: 24px;
}

/* document */
.page {
    flex: 1;
    margin: 20px 327px 0 214px;
    padding: 119px 100px;
    background-color: #fff;
    box-shadow: 0 0 3px 1px rgba(60, 64, 67, 0.15);
    color: #000;
    font-family: Arial, "Liberation Sans", sans-serif;
    font-size: 18px;
    line-height: 24px;
}

.page ul {
    margin: 0;
    padding: 0 0 0 52px;
    list-style: none;
}

.page li {
    display: flex;
    align-items: center;
}

.page li::before {
    content: "";
    width: 8px;
    height: 8px;
    margin-right: 20px;
    border-radius: 50%;
    background-color: #000;
}

.cursor {
    width: 2px;
    height: 21px;
    background-color: #000;
}

.scroll-thumb {
    position: absolute;
    top: 5px;
    right: 5px;
    width: 10px;
    height: 311px;
    border-radius: 5px;
    background-color: #dadce0;
}

.activation {
    position: absolute;
    right: 67px;
    bottom: 39px;
    width: 354px;
    color: #b9babb;
    font-family: "Open Sans", "Noto Sans", sans-serif;
    white-space: nowrap;
}

.activation h2 {
    margin: 0;
    font-size: 19px;
    font-weight: 400;
    line-height: 26px;
}

.activation p {
    margin: 0;
    font-size: 14px;
    line-height: 20px;
}

.explore {
    position: absolute;
    right: 79px;
    bottom: 8px;
    width: 47px;
    height: 47px;
    border: 1px solid #c6c8ca;
    border-radius: 3px;
    background-color: #f8f8f8;
}

.explore svg {
    width: 24px;
    height: 28px;
}

.side-toggle {
    position: absolute;
    right: 0;
    bottom: 10px;
    width: 30px;
    height: 50px;
    padding-left: 4px;
    border-radius: 25px 0 0 25px;
    background-color: #fff;
    box-shadow: 0 1px 4px rgba(60, 64, 67, 0.5);
}

.side-toggle svg {
    width: 12px;
    height: 12px;
}

.taskbar {
    flex: none;
    height: 2px;
    background: linear-gradient(#0063b1, #0063b1) 1178px 0 / 48px 2px no-repeat #00437a;
}
```
